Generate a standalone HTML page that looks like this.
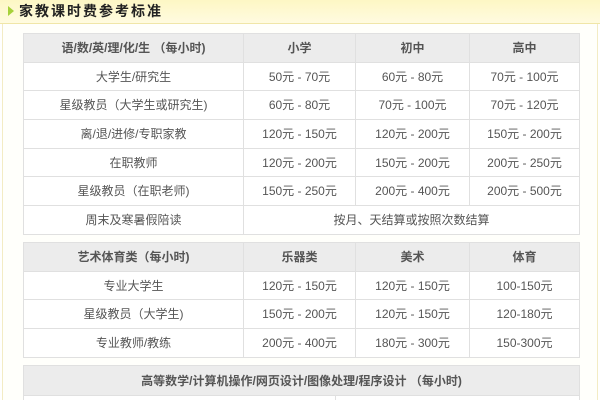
<!DOCTYPE html>
<html><head><meta charset="utf-8"><style>
*{margin:0;padding:0;box-sizing:border-box}
html,body{width:600px;height:400px;overflow:hidden;background:#fff}
body{font-family:"Liberation Sans","Noto Sans CJK SC",sans-serif;position:relative}
.frame{position:absolute;left:2px;top:0;width:596px;height:400px;border-left:1px solid #f3ecc4;border-right:1px solid #f3ecc4;background:#fffffb}
.bar{position:absolute;left:0;top:0;width:600px;height:24px;background:linear-gradient(#fdf7c4,#fffbe0);border-bottom:1px solid #f0e6a8}
.tri{position:absolute;left:8px;top:6px;width:0;height:0;border-left:6px solid #a6d13a;border-top:5px solid transparent;border-bottom:5px solid transparent}
.title{position:absolute;left:19px;top:3px;font-size:14px;font-weight:bold;color:#222;letter-spacing:2px;line-height:17px}
table{position:absolute;left:23px;width:556px;border-collapse:collapse;table-layout:fixed}
td{border:1px solid #e0e0e0;text-align:center;font-size:12px;color:#555;background:#fff;height:28.7px;padding:0;white-space:nowrap;line-height:14px}
tr.h td{background:#ececec;font-weight:bold;color:#555}
</style></head><body>
<div class="frame"></div>
<div class="bar"><div class="tri"></div><div class="title">家教课时费参考标准</div></div>
<table style="top:33px">
<colgroup><col style="width:220px"><col style="width:112px"><col style="width:114px"><col style="width:110px"></colgroup>
<tr class="h"><td>语/数/英/理/化/生 （每小时)</td><td>小学</td><td>初中</td><td>高中</td></tr>
<tr><td>大学生/研究生</td><td>50元 - 70元</td><td>60元 - 80元</td><td>70元 - 100元</td></tr>
<tr><td>星级教员（大学生或研究生)</td><td>60元 - 80元</td><td>70元 - 100元</td><td>70元 - 120元</td></tr>
<tr><td>离/退/进修/专职家教</td><td>120元 - 150元</td><td>120元 - 200元</td><td>150元 - 200元</td></tr>
<tr><td>在职教师</td><td>120元 - 200元</td><td>150元 - 200元</td><td>200元 - 250元</td></tr>
<tr><td>星级教员（在职老师)</td><td>150元 - 250元</td><td>200元 - 400元</td><td>200元 - 500元</td></tr>
<tr><td>周末及寒暑假陪读</td><td colspan="3">按月、天结算或按照次数结算</td></tr>
</table>
<table style="top:242px">
<colgroup><col style="width:220px"><col style="width:112px"><col style="width:114px"><col style="width:110px"></colgroup>
<tr class="h"><td>艺术体育类（每小时)</td><td>乐器类</td><td>美术</td><td>体育</td></tr>
<tr><td>专业大学生</td><td>120元 - 150元</td><td>120元 - 150元</td><td>100-150元</td></tr>
<tr><td>星级教员（大学生)</td><td>150元 - 200元</td><td>120元 - 150元</td><td>120-180元</td></tr>
<tr><td>专业教师/教练</td><td>200元 - 400元</td><td>180元 - 300元</td><td>150-300元</td></tr>
</table>
<table style="top:365px">
<colgroup><col style="width:312px"><col style="width:244px"></colgroup>
<tr class="h"><td colspan="2" style="height:30px">高等数学/计算机操作/网页设计/图像处理/程序设计 （每小时)</td></tr>
<tr><td style="height:10px"></td><td style="height:10px"></td></tr>
</table>
</body></html>
